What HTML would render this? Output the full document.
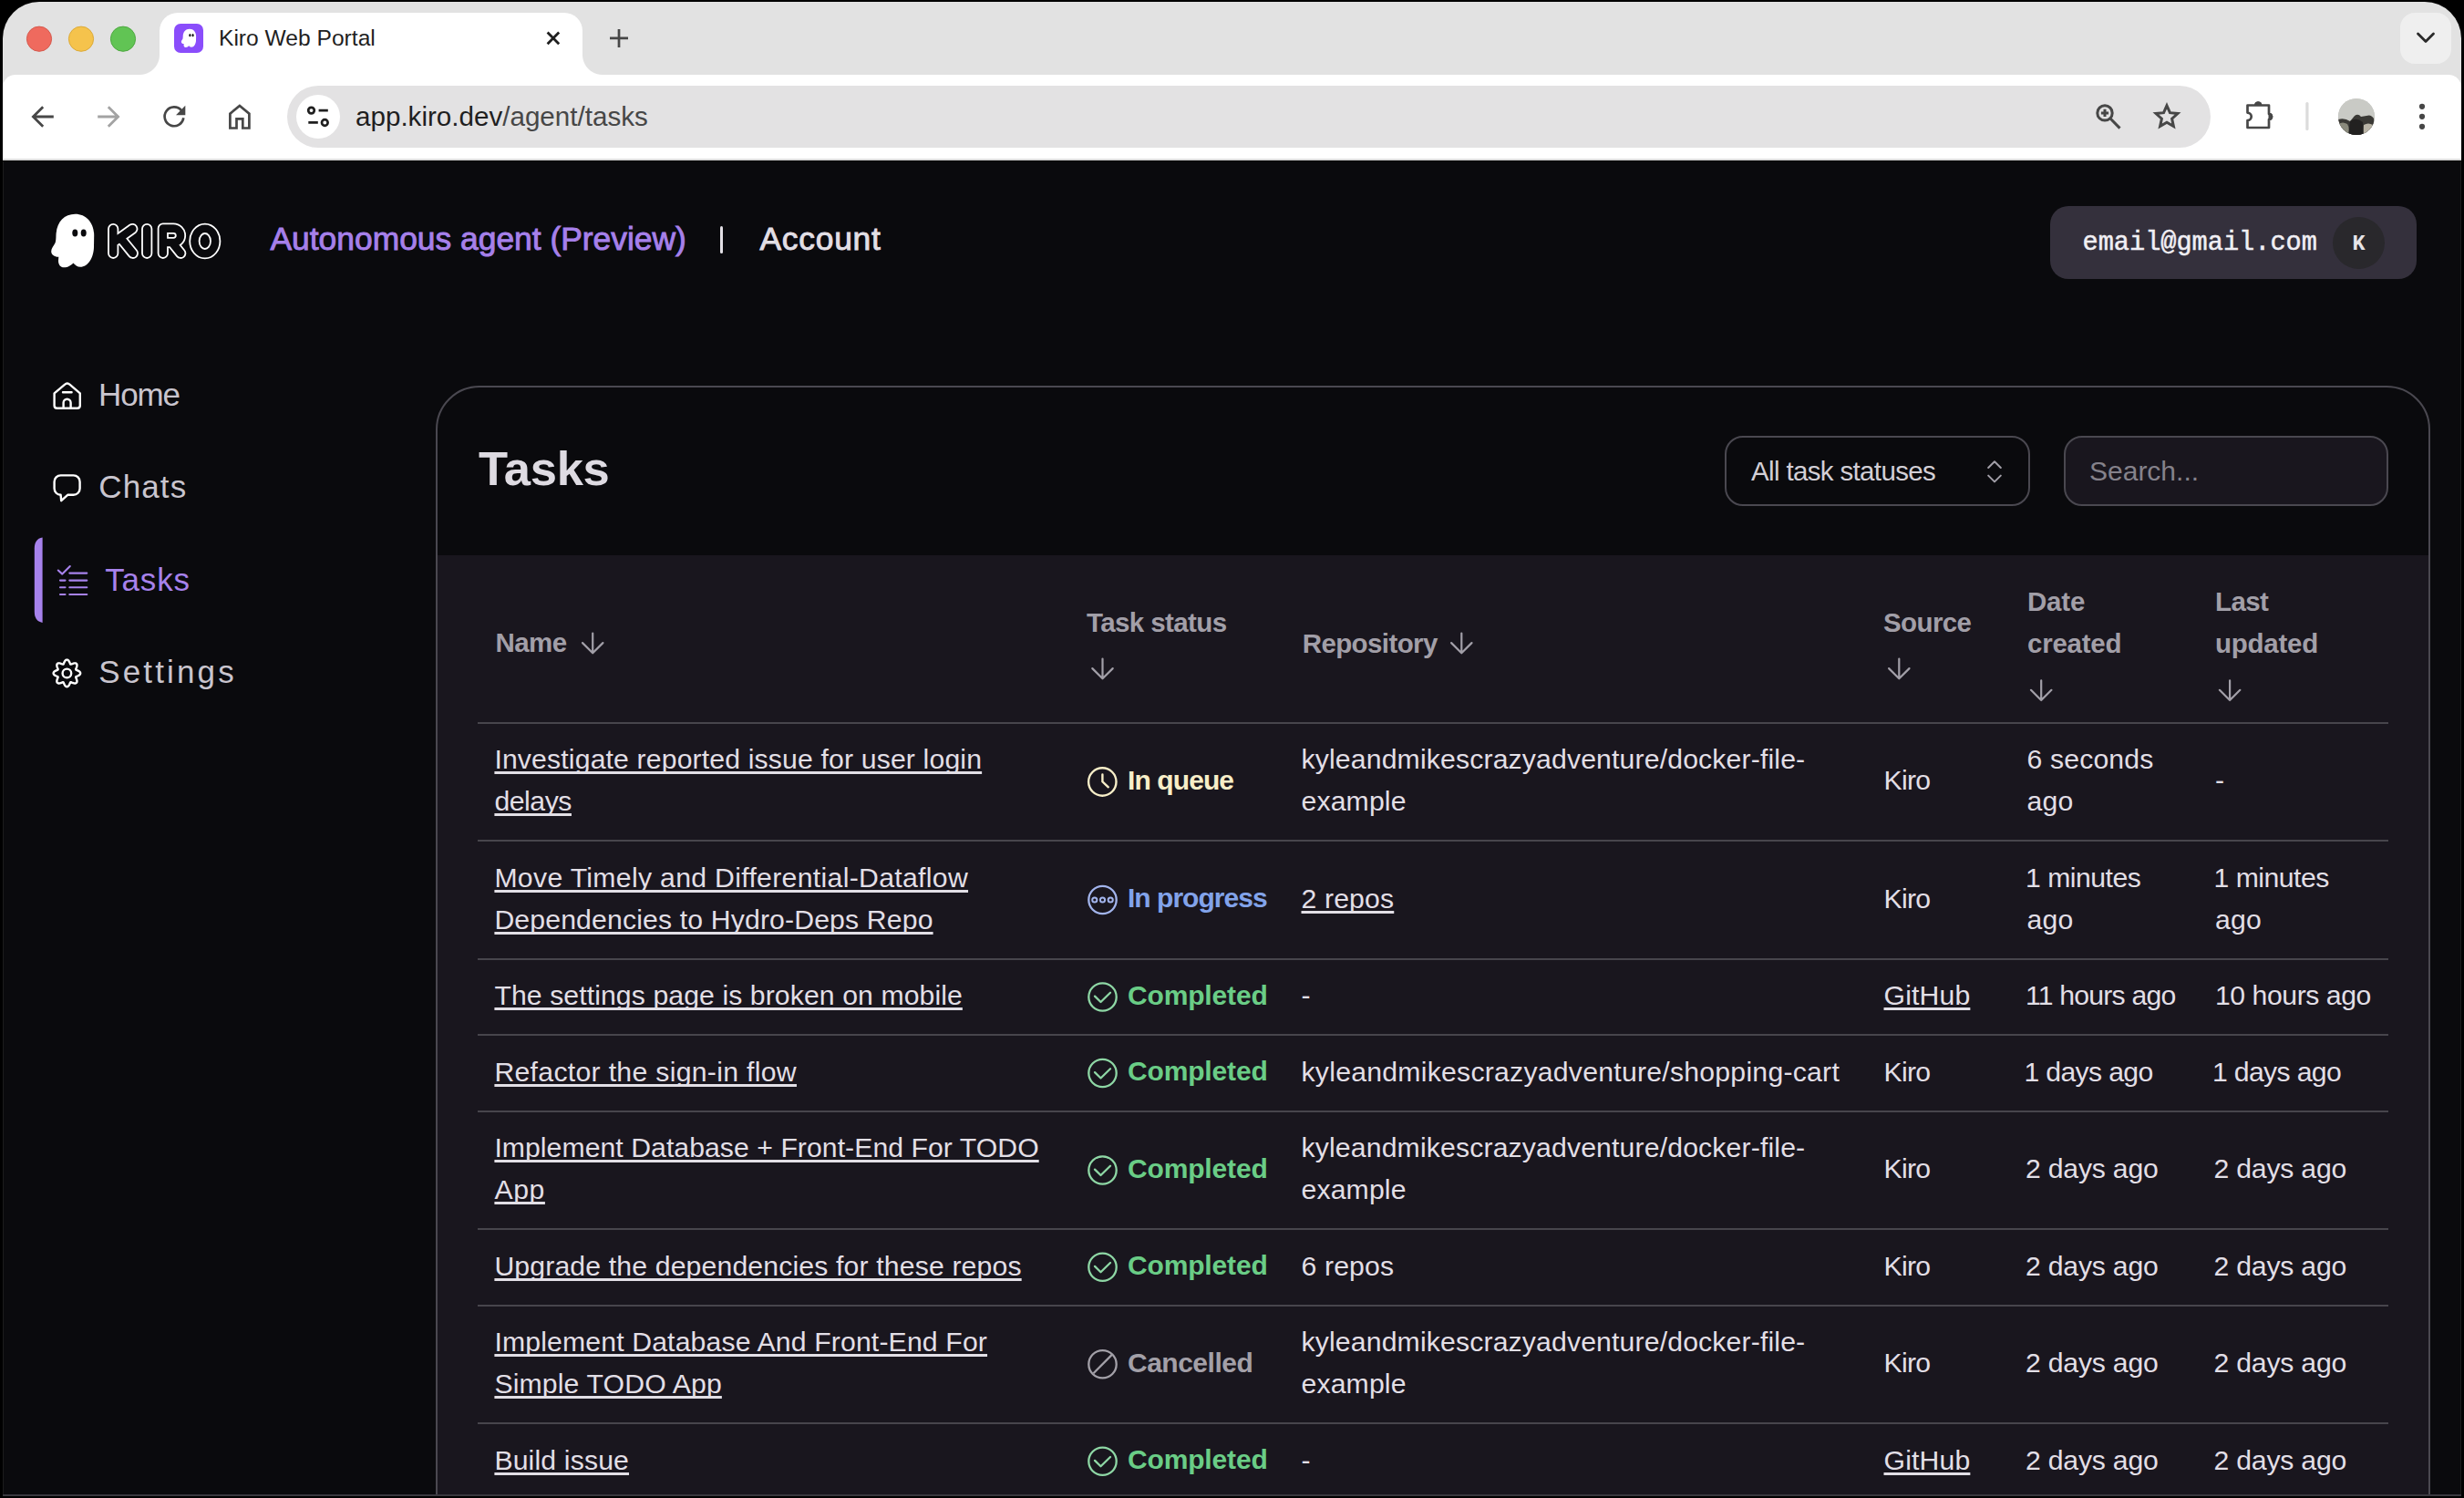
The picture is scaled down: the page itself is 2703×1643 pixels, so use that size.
<!DOCTYPE html>
<html><head><meta charset="utf-8"><title>Kiro Web Portal</title>
<style>
html,body{margin:0;padding:0}
body{width:2703px;height:1643px;background:#000;position:relative;overflow:hidden;font-family:'Liberation Sans', sans-serif}
</style></head><body>
<div style="position:absolute;left:3px;top:2px;width:2697px;height:120px;background:#e2e2e2;border-radius:40px 40px 0 0"></div><div style="position:absolute;left:3px;top:82px;width:2697px;height:92px;background:#ffffff;border-radius:14px 14px 0 0"></div><div style="position:absolute;left:3px;top:174px;width:2697px;height:2px;background:#dcdcdc"></div><div style="position:absolute;left:3px;top:176px;width:2697px;height:1463px;background:#0a0a0d;border-left:1px solid #1c1c1c;border-right:1px solid #1c1c1c;box-sizing:border-box"></div><div style="position:absolute;left:3px;top:176px;width:2697px;height:1px;background:#050505"></div><div style="position:absolute;left:175px;top:14px;width:464px;height:70px;background:#fff;border-radius:20px 20px 0 0"></div><div style="position:absolute;left:153px;top:60px;width:22px;height:22px;background:radial-gradient(circle at 0 0, transparent 21.5px, #fff 22.5px)"></div><div style="position:absolute;left:639px;top:60px;width:22px;height:22px;background:radial-gradient(circle at 100% 0, transparent 21.5px, #fff 22.5px)"></div><div style="position:absolute;left:2633px;top:14px;width:56px;height:56px;background:#efefef;border-radius:16px"></div><div style="position:absolute;left:315px;top:94px;width:2110px;height:68px;background:#e3e2e3;border-radius:34px"></div><div style="position:absolute;left:325px;top:104px;width:48px;height:48px;background:#fff;border-radius:50%"></div><div style="position:absolute;left:191px;top:26px;width:32px;height:32px;background:#8a4dfb;border-radius:7px"></div><div style="position:absolute;left:240.00px;top:29.77px;font:400 24.6px/24.6px 'Liberation Sans', sans-serif;color:#1f1f1f;letter-spacing:0px;white-space:nowrap;">Kiro Web Portal</div><div style="position:absolute;left:390.00px;top:112.84px;font:400 29.6px/29.6px 'Liberation Sans', sans-serif;color:#1f1f1f;letter-spacing:0px;white-space:nowrap;">app.kiro.dev<span style="color:#474747">/agent/tasks</span></div><div style="position:absolute;left:296.50px;top:244.63px;font:400 35.4px/35.4px 'Liberation Sans', sans-serif;color:#a680ea;letter-spacing:0px;white-space:nowrap;-webkit-text-stroke:0.9px #a680ea">Autonomous agent (Preview)</div><div style="position:absolute;left:789.5px;top:248px;width:3px;height:30px;background:#e2dfe5;border-radius:1.5px"></div><div style="position:absolute;left:833.50px;top:244.63px;font:400 35.4px/35.4px 'Liberation Sans', sans-serif;color:#e2dfe5;letter-spacing:0.75px;white-space:nowrap;-webkit-text-stroke:0.9px #e2dfe5">Account</div><div style="position:absolute;left:2249px;top:226px;width:402px;height:80px;background:#34303c;border-radius:20px"></div><div style="position:absolute;left:2559px;top:237.5px;width:57px;height:57px;background:#29282c;border-radius:50%"></div><div style="position:absolute;left:2284.50px;top:253.29px;font:400 28.6px/28.6px 'Liberation Mono', monospace;color:#f1eff4;letter-spacing:0px;white-space:nowrap;-webkit-text-stroke:0.5px #f1eff4">email@gmail.com</div><div style="position:absolute;left:2580.50px;top:255.80px;font:700 23.5px/23.5px 'Liberation Mono', monospace;color:#e6e4e8;letter-spacing:0px;white-space:nowrap;">K</div><div style="position:absolute;left:108.10px;top:415.27px;font:400 35px/35px 'Liberation Sans', sans-serif;color:#c9c5ce;letter-spacing:-1.2px;white-space:nowrap;">Home</div><div style="position:absolute;left:108.30px;top:516.37px;font:400 35px/35px 'Liberation Sans', sans-serif;color:#c9c5ce;letter-spacing:1.1px;white-space:nowrap;">Chats</div><div style="position:absolute;left:115.30px;top:617.87px;font:400 35px/35px 'Liberation Sans', sans-serif;color:#a782ec;letter-spacing:0.8px;white-space:nowrap;">Tasks</div><div style="position:absolute;left:108.20px;top:719.37px;font:400 35px/35px 'Liberation Sans', sans-serif;color:#c9c5ce;letter-spacing:3.15px;white-space:nowrap;">Settings</div><div style="position:absolute;left:478px;top:423px;width:2188px;height:1400px;border:2px solid #4a4850;border-radius:48px;box-sizing:border-box;background:#0a0a0d;overflow:hidden"><div style="position:absolute;left:0;top:184px;width:100%;height:1300px;background:#19161e"></div></div><div style="position:absolute;left:525.00px;top:487.85px;font:700 52.5px/52.5px 'Liberation Sans', sans-serif;color:#dedbe2;letter-spacing:-0.3px;white-space:nowrap;">Tasks</div><div style="position:absolute;left:1892px;top:478px;width:335px;height:77px;border:2px solid #4a4850;border-radius:20px;box-sizing:border-box"></div><div style="position:absolute;left:1921.00px;top:502.02px;font:400 29.5px/29.5px 'Liberation Sans', sans-serif;color:#d2cfd6;letter-spacing:-0.65px;white-space:nowrap;">All task statuses</div><div style="position:absolute;left:2263.5px;top:478px;width:356px;height:77px;border:2px solid #4a4850;border-radius:20px;box-sizing:border-box;background:#19161e"></div><div style="position:absolute;left:2292.00px;top:501.60px;font:400 30px/30px 'Liberation Sans', sans-serif;color:#85828b;letter-spacing:0px;white-space:nowrap;">Search...</div><div style="position:absolute;left:543.50px;top:690.42px;font:700 29.5px/29.5px 'Liberation Sans', sans-serif;color:#a29fa8;letter-spacing:-0.6px;white-space:nowrap;">Name</div><div style="position:absolute;left:1192.00px;top:668.02px;font:700 29.5px/29.5px 'Liberation Sans', sans-serif;color:#a29fa8;letter-spacing:-0.6px;white-space:nowrap;">Task status</div><div style="position:absolute;left:1428.70px;top:690.52px;font:700 29.5px/29.5px 'Liberation Sans', sans-serif;color:#a29fa8;letter-spacing:-0.6px;white-space:nowrap;">Repository</div><div style="position:absolute;left:2066.00px;top:668.32px;font:700 29.5px/29.5px 'Liberation Sans', sans-serif;color:#a29fa8;letter-spacing:-0.6px;white-space:nowrap;">Source</div><div style="position:absolute;left:2224.00px;top:645.02px;font:700 29.5px/29.5px 'Liberation Sans', sans-serif;color:#a29fa8;letter-spacing:-0.2px;white-space:nowrap;">Date</div><div style="position:absolute;left:2224.00px;top:690.62px;font:700 29.5px/29.5px 'Liberation Sans', sans-serif;color:#a29fa8;letter-spacing:-0.25px;white-space:nowrap;">created</div><div style="position:absolute;left:2430.00px;top:645.02px;font:700 29.5px/29.5px 'Liberation Sans', sans-serif;color:#a29fa8;letter-spacing:-0.6px;white-space:nowrap;">Last</div><div style="position:absolute;left:2430.00px;top:690.62px;font:700 29.5px/29.5px 'Liberation Sans', sans-serif;color:#a29fa8;letter-spacing:-0.25px;white-space:nowrap;">updated</div><div style="position:absolute;left:524px;top:792px;width:2095.5px;height:2px;background:#47454c"></div><div style="position:absolute;left:524px;top:921px;width:2095.5px;height:2px;background:#47454c"></div><div style="position:absolute;left:524px;top:1051px;width:2095.5px;height:2px;background:#47454c"></div><div style="position:absolute;left:524px;top:1134px;width:2095.5px;height:2px;background:#47454c"></div><div style="position:absolute;left:524px;top:1218px;width:2095.5px;height:2px;background:#47454c"></div><div style="position:absolute;left:524px;top:1347px;width:2095.5px;height:2px;background:#47454c"></div><div style="position:absolute;left:524px;top:1430.5px;width:2095.5px;height:2px;background:#47454c"></div><div style="position:absolute;left:524px;top:1560px;width:2095.5px;height:2px;background:#47454c"></div><div style="position:absolute;left:542.40px;top:818.43px;font:400 30.2px/30.2px 'Liberation Sans', sans-serif;color:#e2dfe6;letter-spacing:0.15px;white-space:nowrap;text-decoration:underline;text-decoration-thickness:3px;text-underline-offset:2.7px;text-decoration-skip-ink:none">Investigate reported issue for user login</div><div style="position:absolute;left:542.40px;top:864.43px;font:400 30.2px/30.2px 'Liberation Sans', sans-serif;color:#e2dfe6;letter-spacing:-0.45px;white-space:nowrap;text-decoration:underline;text-decoration-thickness:3px;text-underline-offset:2.7px;text-decoration-skip-ink:none">delays</div><div style="position:absolute;left:1237.00px;top:840.80px;font:700 30px/30px 'Liberation Sans', sans-serif;color:#f7eec8;letter-spacing:-0.9px;white-space:nowrap;">In queue</div><div style="position:absolute;left:1427.50px;top:818.43px;font:400 30.2px/30.2px 'Liberation Sans', sans-serif;color:#e2dfe6;letter-spacing:0.15px;white-space:nowrap;">kyleandmikescrazyadventure/docker-file-</div><div style="position:absolute;left:1427.50px;top:864.43px;font:400 30.2px/30.2px 'Liberation Sans', sans-serif;color:#e2dfe6;letter-spacing:0.15px;white-space:nowrap;">example</div><div style="position:absolute;left:2066.50px;top:841.43px;font:400 30.2px/30.2px 'Liberation Sans', sans-serif;color:#e2dfe6;letter-spacing:-0.72px;white-space:nowrap;">Kiro</div><div style="position:absolute;left:2223.50px;top:818.43px;font:400 30.2px/30.2px 'Liberation Sans', sans-serif;color:#e2dfe6;letter-spacing:0.15px;white-space:nowrap;">6 seconds</div><div style="position:absolute;left:2223.50px;top:864.43px;font:400 30.2px/30.2px 'Liberation Sans', sans-serif;color:#e2dfe6;letter-spacing:0.15px;white-space:nowrap;">ago</div><div style="position:absolute;left:2430.00px;top:841.43px;font:400 30.2px/30.2px 'Liberation Sans', sans-serif;color:#e2dfe6;letter-spacing:0.15px;white-space:nowrap;">-</div><div style="position:absolute;left:542.40px;top:947.93px;font:400 30.2px/30.2px 'Liberation Sans', sans-serif;color:#e2dfe6;letter-spacing:0.32px;white-space:nowrap;text-decoration:underline;text-decoration-thickness:3px;text-underline-offset:2.7px;text-decoration-skip-ink:none">Move Timely and Differential-Dataflow</div><div style="position:absolute;left:542.40px;top:993.93px;font:400 30.2px/30.2px 'Liberation Sans', sans-serif;color:#e2dfe6;letter-spacing:0.15px;white-space:nowrap;text-decoration:underline;text-decoration-thickness:3px;text-underline-offset:2.7px;text-decoration-skip-ink:none">Dependencies to Hydro-Deps Repo</div><div style="position:absolute;left:1237.00px;top:970.30px;font:700 30px/30px 'Liberation Sans', sans-serif;color:#82a3ea;letter-spacing:-0.98px;white-space:nowrap;">In progress</div><div style="position:absolute;left:1427.50px;top:970.93px;font:400 30.2px/30.2px 'Liberation Sans', sans-serif;color:#e2dfe6;letter-spacing:0.15px;white-space:nowrap;text-decoration:underline;text-decoration-thickness:3px;text-underline-offset:2.7px;text-decoration-skip-ink:none">2 repos</div><div style="position:absolute;left:2066.50px;top:970.93px;font:400 30.2px/30.2px 'Liberation Sans', sans-serif;color:#e2dfe6;letter-spacing:-0.72px;white-space:nowrap;">Kiro</div><div style="position:absolute;left:2222.00px;top:947.93px;font:400 30.2px/30.2px 'Liberation Sans', sans-serif;color:#e2dfe6;letter-spacing:-0.5px;white-space:nowrap;">1 minutes</div><div style="position:absolute;left:2223.50px;top:993.93px;font:400 30.2px/30.2px 'Liberation Sans', sans-serif;color:#e2dfe6;letter-spacing:0.15px;white-space:nowrap;">ago</div><div style="position:absolute;left:2428.50px;top:947.93px;font:400 30.2px/30.2px 'Liberation Sans', sans-serif;color:#e2dfe6;letter-spacing:-0.5px;white-space:nowrap;">1 minutes</div><div style="position:absolute;left:2430.00px;top:993.93px;font:400 30.2px/30.2px 'Liberation Sans', sans-serif;color:#e2dfe6;letter-spacing:0.15px;white-space:nowrap;">ago</div><div style="position:absolute;left:542.40px;top:1077.43px;font:400 30.2px/30.2px 'Liberation Sans', sans-serif;color:#e2dfe6;letter-spacing:0.09px;white-space:nowrap;text-decoration:underline;text-decoration-thickness:3px;text-underline-offset:2.7px;text-decoration-skip-ink:none">The settings page is broken on mobile</div><div style="position:absolute;left:1237.00px;top:1076.80px;font:700 30px/30px 'Liberation Sans', sans-serif;color:#6acd86;letter-spacing:-0.16px;white-space:nowrap;">Completed</div><div style="position:absolute;left:1427.50px;top:1077.43px;font:400 30.2px/30.2px 'Liberation Sans', sans-serif;color:#e2dfe6;letter-spacing:0.15px;white-space:nowrap;">-</div><div style="position:absolute;left:2066.50px;top:1077.43px;font:400 30.2px/30.2px 'Liberation Sans', sans-serif;color:#e2dfe6;letter-spacing:0.15px;white-space:nowrap;text-decoration:underline;text-decoration-thickness:3px;text-underline-offset:2.7px;text-decoration-skip-ink:none">GitHub</div><div style="position:absolute;left:2222.00px;top:1077.43px;font:400 30.2px/30.2px 'Liberation Sans', sans-serif;color:#e2dfe6;letter-spacing:-0.8px;white-space:nowrap;">11 hours ago</div><div style="position:absolute;left:2430.00px;top:1077.43px;font:400 30.2px/30.2px 'Liberation Sans', sans-serif;color:#e2dfe6;letter-spacing:-0.45px;white-space:nowrap;">10 hours ago</div><div style="position:absolute;left:542.40px;top:1160.93px;font:400 30.2px/30.2px 'Liberation Sans', sans-serif;color:#e2dfe6;letter-spacing:0.31px;white-space:nowrap;text-decoration:underline;text-decoration-thickness:3px;text-underline-offset:2.7px;text-decoration-skip-ink:none">Refactor the sign-in flow</div><div style="position:absolute;left:1237.00px;top:1160.30px;font:700 30px/30px 'Liberation Sans', sans-serif;color:#6acd86;letter-spacing:-0.16px;white-space:nowrap;">Completed</div><div style="position:absolute;left:1427.50px;top:1160.93px;font:400 30.2px/30.2px 'Liberation Sans', sans-serif;color:#e2dfe6;letter-spacing:0.25px;white-space:nowrap;">kyleandmikescrazyadventure/shopping-cart</div><div style="position:absolute;left:2066.50px;top:1160.93px;font:400 30.2px/30.2px 'Liberation Sans', sans-serif;color:#e2dfe6;letter-spacing:-0.72px;white-space:nowrap;">Kiro</div><div style="position:absolute;left:2220.50px;top:1160.93px;font:400 30.2px/30.2px 'Liberation Sans', sans-serif;color:#e2dfe6;letter-spacing:-0.67px;white-space:nowrap;">1 days ago</div><div style="position:absolute;left:2427.00px;top:1160.93px;font:400 30.2px/30.2px 'Liberation Sans', sans-serif;color:#e2dfe6;letter-spacing:-0.67px;white-space:nowrap;">1 days ago</div><div style="position:absolute;left:542.40px;top:1244.43px;font:400 30.2px/30.2px 'Liberation Sans', sans-serif;color:#e2dfe6;letter-spacing:0.05px;white-space:nowrap;text-decoration:underline;text-decoration-thickness:3px;text-underline-offset:2.7px;text-decoration-skip-ink:none">Implement Database + Front-End For TODO</div><div style="position:absolute;left:542.40px;top:1290.43px;font:400 30.2px/30.2px 'Liberation Sans', sans-serif;color:#e2dfe6;letter-spacing:0.6px;white-space:nowrap;text-decoration:underline;text-decoration-thickness:3px;text-underline-offset:2.7px;text-decoration-skip-ink:none">App</div><div style="position:absolute;left:1237.00px;top:1266.80px;font:700 30px/30px 'Liberation Sans', sans-serif;color:#6acd86;letter-spacing:-0.16px;white-space:nowrap;">Completed</div><div style="position:absolute;left:1427.50px;top:1244.43px;font:400 30.2px/30.2px 'Liberation Sans', sans-serif;color:#e2dfe6;letter-spacing:0.15px;white-space:nowrap;">kyleandmikescrazyadventure/docker-file-</div><div style="position:absolute;left:1427.50px;top:1290.43px;font:400 30.2px/30.2px 'Liberation Sans', sans-serif;color:#e2dfe6;letter-spacing:0.15px;white-space:nowrap;">example</div><div style="position:absolute;left:2066.50px;top:1267.43px;font:400 30.2px/30.2px 'Liberation Sans', sans-serif;color:#e2dfe6;letter-spacing:-0.72px;white-space:nowrap;">Kiro</div><div style="position:absolute;left:2222.00px;top:1267.43px;font:400 30.2px/30.2px 'Liberation Sans', sans-serif;color:#e2dfe6;letter-spacing:-0.21px;white-space:nowrap;">2 days ago</div><div style="position:absolute;left:2428.50px;top:1267.43px;font:400 30.2px/30.2px 'Liberation Sans', sans-serif;color:#e2dfe6;letter-spacing:-0.21px;white-space:nowrap;">2 days ago</div><div style="position:absolute;left:542.40px;top:1373.68px;font:400 30.2px/30.2px 'Liberation Sans', sans-serif;color:#e2dfe6;letter-spacing:0.15px;white-space:nowrap;text-decoration:underline;text-decoration-thickness:3px;text-underline-offset:2.7px;text-decoration-skip-ink:none">Upgrade the dependencies for these repos</div><div style="position:absolute;left:1237.00px;top:1373.05px;font:700 30px/30px 'Liberation Sans', sans-serif;color:#6acd86;letter-spacing:-0.16px;white-space:nowrap;">Completed</div><div style="position:absolute;left:1427.50px;top:1373.68px;font:400 30.2px/30.2px 'Liberation Sans', sans-serif;color:#e2dfe6;letter-spacing:0.15px;white-space:nowrap;">6 repos</div><div style="position:absolute;left:2066.50px;top:1373.68px;font:400 30.2px/30.2px 'Liberation Sans', sans-serif;color:#e2dfe6;letter-spacing:-0.72px;white-space:nowrap;">Kiro</div><div style="position:absolute;left:2222.00px;top:1373.68px;font:400 30.2px/30.2px 'Liberation Sans', sans-serif;color:#e2dfe6;letter-spacing:-0.21px;white-space:nowrap;">2 days ago</div><div style="position:absolute;left:2428.50px;top:1373.68px;font:400 30.2px/30.2px 'Liberation Sans', sans-serif;color:#e2dfe6;letter-spacing:-0.21px;white-space:nowrap;">2 days ago</div><div style="position:absolute;left:542.40px;top:1457.18px;font:400 30.2px/30.2px 'Liberation Sans', sans-serif;color:#e2dfe6;letter-spacing:0.15px;white-space:nowrap;text-decoration:underline;text-decoration-thickness:3px;text-underline-offset:2.7px;text-decoration-skip-ink:none">Implement Database And Front-End For</div><div style="position:absolute;left:542.40px;top:1503.18px;font:400 30.2px/30.2px 'Liberation Sans', sans-serif;color:#e2dfe6;letter-spacing:0.15px;white-space:nowrap;text-decoration:underline;text-decoration-thickness:3px;text-underline-offset:2.7px;text-decoration-skip-ink:none">Simple TODO App</div><div style="position:absolute;left:1237.00px;top:1479.55px;font:700 30px/30px 'Liberation Sans', sans-serif;color:#a3a0a8;letter-spacing:-0.5px;white-space:nowrap;">Cancelled</div><div style="position:absolute;left:1427.50px;top:1457.18px;font:400 30.2px/30.2px 'Liberation Sans', sans-serif;color:#e2dfe6;letter-spacing:0.15px;white-space:nowrap;">kyleandmikescrazyadventure/docker-file-</div><div style="position:absolute;left:1427.50px;top:1503.18px;font:400 30.2px/30.2px 'Liberation Sans', sans-serif;color:#e2dfe6;letter-spacing:0.15px;white-space:nowrap;">example</div><div style="position:absolute;left:2066.50px;top:1480.18px;font:400 30.2px/30.2px 'Liberation Sans', sans-serif;color:#e2dfe6;letter-spacing:-0.72px;white-space:nowrap;">Kiro</div><div style="position:absolute;left:2222.00px;top:1480.18px;font:400 30.2px/30.2px 'Liberation Sans', sans-serif;color:#e2dfe6;letter-spacing:-0.21px;white-space:nowrap;">2 days ago</div><div style="position:absolute;left:2428.50px;top:1480.18px;font:400 30.2px/30.2px 'Liberation Sans', sans-serif;color:#e2dfe6;letter-spacing:-0.21px;white-space:nowrap;">2 days ago</div><div style="position:absolute;left:542.40px;top:1586.68px;font:400 30.2px/30.2px 'Liberation Sans', sans-serif;color:#e2dfe6;letter-spacing:0.15px;white-space:nowrap;text-decoration:underline;text-decoration-thickness:3px;text-underline-offset:2.7px;text-decoration-skip-ink:none">Build issue</div><div style="position:absolute;left:1237.00px;top:1586.05px;font:700 30px/30px 'Liberation Sans', sans-serif;color:#6acd86;letter-spacing:-0.16px;white-space:nowrap;">Completed</div><div style="position:absolute;left:1427.50px;top:1586.68px;font:400 30.2px/30.2px 'Liberation Sans', sans-serif;color:#e2dfe6;letter-spacing:0.15px;white-space:nowrap;">-</div><div style="position:absolute;left:2066.50px;top:1586.68px;font:400 30.2px/30.2px 'Liberation Sans', sans-serif;color:#e2dfe6;letter-spacing:0.15px;white-space:nowrap;text-decoration:underline;text-decoration-thickness:3px;text-underline-offset:2.7px;text-decoration-skip-ink:none">GitHub</div><div style="position:absolute;left:2222.00px;top:1586.68px;font:400 30.2px/30.2px 'Liberation Sans', sans-serif;color:#e2dfe6;letter-spacing:-0.21px;white-space:nowrap;">2 days ago</div><div style="position:absolute;left:2428.50px;top:1586.68px;font:400 30.2px/30.2px 'Liberation Sans', sans-serif;color:#e2dfe6;letter-spacing:-0.21px;white-space:nowrap;">2 days ago</div><div style="position:absolute;left:3px;top:1639px;width:2697px;height:2px;background:#3a383f"></div><div style="position:absolute;left:0;top:1641px;width:2703px;height:2px;background:#000"></div>
<svg style="position:absolute;left:0;top:0" width="2703" height="1643" viewBox="0 0 2703 1643">
<circle cx="43" cy="42.7" r="13.6" fill="#ef6a5e" stroke="#d55a4e" stroke-width="1"/><circle cx="89" cy="42.7" r="13.6" fill="#f5c34c" stroke="#dcaa38" stroke-width="1"/><circle cx="135" cy="42.7" r="13.6" fill="#61c454" stroke="#4ea941" stroke-width="1"/><g transform="translate(198.8,31.7) scale(0.345) translate(-56,-234.7)"><path d="M82.5,234.8 C95,234.8 103.2,245 103.2,258 L103,271 C102.8,282 97,292.8 88,292.8 C84.8,292.8 82.5,290.5 80.3,288.5 C78.2,291 74.5,293.3 70.3,293.3 C66,293.3 64,290 64,286 L64.3,281.8 C60,282 56.2,279.5 56.2,275.8 C56.2,272.3 59,269.8 60.5,266.5 C61.3,264.5 61.4,262 61.5,258 C62,244 70,234.8 82.5,234.8 Z" fill="#fff"/><ellipse cx="83.8" cy="255" rx="3.2" ry="4.6" fill="#111"/><ellipse cx="93" cy="255" rx="3.2" ry="4.6" fill="#111"/></g><path d="M600.6,35.6 L613.2,48.2 M613.2,35.6 L600.6,48.2" stroke="#1f1f1f" stroke-width="2.8"/><path d="M679,32 V52 M669,41.8 H689" stroke="#474747" stroke-width="2.7"/><path d="M2652.5,37 L2661,45.5 L2669.5,37" stroke="#2a2a2a" stroke-width="2.8" fill="none" stroke-linecap="round" stroke-linejoin="round"/><path d="M58.8,128 H37 M47.2,117.2 L36.4,128 L47.2,138.8" stroke="#474747" stroke-width="2.8" fill="none" stroke-linecap="butt" stroke-linejoin="miter"/><path d="M107.2,128 H129 M118.8,117.2 L129.6,128 L118.8,138.8" stroke="#a3a3a3" stroke-width="2.8" fill="none"/><path d="M198.97,121.12 A10.4,10.4 0 1 0 201.30,129.25" stroke="#474747" stroke-width="2.7" fill="none"/><path d="M203.3,115.8 V126.2 H193 Z" fill="#474747"/><path d="M252.4,140.5 V124.6 L262.9,116 L273.4,124.6 V140.5 H266.3 V130.4 H259.5 V140.5 Z" stroke="#474747" stroke-width="2.7" fill="none" stroke-linejoin="miter"/><circle cx="341.5" cy="121.1" r="3.3" stroke="#1f1f1f" stroke-width="2.7" fill="none"/><path d="M349.6,121.1 H359.8 M338.3,134.4 H348.8" stroke="#1f1f1f" stroke-width="2.7"/><circle cx="356.3" cy="134.5" r="3.3" stroke="#1f1f1f" stroke-width="2.7" fill="none"/><circle cx="2309" cy="123.9" r="8.2" stroke="#474747" stroke-width="3" fill="none"/><path d="M2314.8,129.7 L2325.5,140.6" stroke="#474747" stroke-width="3"/><path d="M2309,119.8 V128 M2304.9,123.9 H2313.1" stroke="#474747" stroke-width="3"/><path d="M2377.00,115.80 L2380.47,123.63 L2388.98,124.51 L2382.61,130.22 L2384.41,138.59 L2377.00,134.30 L2369.59,138.59 L2371.39,130.22 L2365.02,124.51 L2373.53,123.63 Z" stroke="#474747" stroke-width="3" fill="none" stroke-linejoin="miter" stroke-miterlimit="10"/><path d="M2465.5,115.5 H2489 V125 A1,1 0 0 1 2489,131 V140 H2465.5 V132 A4.2,4.2 0 0 0 2465.5,123.6 Z" stroke="#474747" stroke-width="2.7" fill="none" stroke-linejoin="round"/><path d="M2473.3,115.5 A3.9,3.9 0 0 1 2481.1,115.5 Z" fill="#474747" stroke="#474747" stroke-width="1"/><path d="M2489,124 A3.9,3.9 0 0 1 2489,131.8 Z" fill="#474747" stroke="#474747" stroke-width="1"/><rect x="2529.3" y="112" width="3.2" height="31" rx="1.5" fill="#dcdcdc"/><defs><linearGradient id="av" x1="0" y1="0" x2="0" y2="1"><stop offset="0" stop-color="#d0d1cc"/><stop offset="0.45" stop-color="#b9bab5"/><stop offset="0.6" stop-color="#6b6b66"/><stop offset="1" stop-color="#2e2e2a"/></linearGradient><clipPath id="avc"><circle cx="2585" cy="128" r="20"/></clipPath></defs><circle cx="2585" cy="128" r="20" fill="url(#av)"/><g clip-path="url(#avc)"><rect x="2565" y="108" width="40" height="40" fill="#c9cac5"/><path d="M2565,131 Q2572,129 2578,133 L2583,127 Q2587,124 2590,128 L2596,127 Q2601,125 2604,130 V150 H2565 Z" fill="#3a3935"/><path d="M2565,136 Q2570,133 2575,136 Q2578,140 2576,150 H2565 Z" fill="#8a8a7c"/><path d="M2593,137 Q2598,134 2603,137 L2600,148 H2592 Z" fill="#b9b4a6"/><path d="M2578,133 Q2585,128 2592,134 L2593,150 H2576 Z" fill="#222120"/></g><circle cx="2657" cy="116.8" r="3.1" fill="#474747"/><circle cx="2657" cy="127.8" r="3.1" fill="#474747"/><circle cx="2657" cy="138.8" r="3.1" fill="#474747"/><path d="M82.5,234.8 C95,234.8 103.2,245 103.2,258 L103,271 C102.8,282 97,292.8 88,292.8 C84.8,292.8 82.5,290.5 80.3,288.5 C78.2,291 74.5,293.3 70.3,293.3 C66,293.3 64,290 64,286 L64.3,281.8 C60,282 56.2,279.5 56.2,275.8 C56.2,272.3 59,269.8 60.5,266.5 C61.3,264.5 61.4,262 61.5,258 C62,244 70,234.8 82.5,234.8 Z" fill="#fff"/><ellipse cx="82.3" cy="255.5" rx="3" ry="4.1" fill="#0a0a0d"/><ellipse cx="91.7" cy="255.5" rx="3" ry="4.1" fill="#0a0a0d"/><path d="M124.2,251 V277.8 M126.5,264.5 L145.3,251 M132.5,261.5 L145.8,277.8 M161.2,251 V277.8 M178.8,277.8 V250.6 H190.3 A7.7,7.7 0 0 1 190.3,266 H180 M189.5,267 L198.2,277.8" stroke="#fff" stroke-width="12.2" fill="none" stroke-linecap="round" stroke-linejoin="round"/><ellipse cx="224.8" cy="264.5" rx="11.4" ry="13.7" stroke="#fff" stroke-width="12.2" fill="none"/><path d="M124.2,251 V277.8 M126.5,264.5 L145.3,251 M132.5,261.5 L145.8,277.8 M161.2,251 V277.8 M178.8,277.8 V250.6 H190.3 A7.7,7.7 0 0 1 190.3,266 H180 M189.5,267 L198.2,277.8" stroke="#0a0a0d" stroke-width="8.6" fill="none" stroke-linecap="round" stroke-linejoin="round"/><ellipse cx="224.8" cy="264.5" rx="11.4" ry="13.7" stroke="#0a0a0d" stroke-width="8.6" fill="none"/><path d="M46.6,589.6 C40.5,590.6 37.8,595 37.8,601.5 V671.1 C37.8,677.6 40.5,682 46.6,683 Z" fill="#a782ec"/><path d="M70.9,421.8 Q73.8,419.4 76.7,421.8 L87.8,431.3 V444.8 Q87.8,447.8 84.8,447.8 H62.6 Q59.6,447.8 59.6,444.8 V431.3 Z" stroke="#fff" stroke-width="2.4" fill="none" stroke-linejoin="round"/><path d="M69.6,447.8 V441.8 A4,4 0 0 1 77.6,441.8 V447.8 M69,430.2 H78.6" stroke="#fff" stroke-width="2.4" fill="none" stroke-linecap="round"/><path d="M66.6,542.8 A7,7 0 0 1 59.6,535.8 V528.4 A7,7 0 0 1 66.6,521.4 H80.6 A7,7 0 0 1 87.6,528.4 V535.8 A7,7 0 0 1 80.6,542.8 H74.2 L67.2,549.2 Z" stroke="#fff" stroke-width="2.4" fill="none" stroke-linejoin="round"/><path d="M63.8,625.5 L68.3,629.6 L76.8,621 M66,636.6 H71.5 M66,644.2 H71.5 M66,652 H71.5 M76.3,628.6 H95.3 M76.3,636.6 H95.3 M76.3,644.2 H95.3 M76.3,652 H95.3" stroke="#a782ec" stroke-width="2.1" fill="none" stroke-linecap="round" stroke-linejoin="round"/><path d="M73.40,723.60 L73.88,723.67 L74.35,723.86 L74.80,724.17 L75.22,724.58 L75.60,725.08 L75.94,725.64 L76.24,726.23 L76.50,726.82 L76.74,727.39 L76.96,727.91 L77.19,728.33 L77.46,728.61 L77.84,728.60 L78.30,728.46 L78.82,728.26 L79.39,728.02 L80.00,727.79 L80.63,727.58 L81.26,727.43 L81.88,727.34 L82.47,727.35 L83.01,727.44 L83.48,727.64 L83.87,727.93 L84.16,728.32 L84.36,728.79 L84.45,729.33 L84.46,729.92 L84.37,730.54 L84.22,731.17 L84.01,731.80 L83.78,732.41 L83.54,732.98 L83.34,733.50 L83.20,733.96 L83.19,734.34 L83.47,734.61 L83.89,734.84 L84.41,735.06 L84.98,735.30 L85.57,735.56 L86.16,735.86 L86.72,736.20 L87.22,736.58 L87.63,737.00 L87.94,737.45 L88.13,737.92 L88.20,738.40 L88.13,738.88 L87.94,739.35 L87.63,739.80 L87.22,740.22 L86.72,740.60 L86.16,740.94 L85.57,741.24 L84.98,741.50 L84.41,741.74 L83.89,741.96 L83.47,742.19 L83.19,742.46 L83.20,742.84 L83.34,743.30 L83.54,743.82 L83.78,744.39 L84.01,745.00 L84.22,745.63 L84.37,746.26 L84.46,746.88 L84.45,747.47 L84.36,748.01 L84.16,748.48 L83.87,748.87 L83.48,749.16 L83.01,749.36 L82.47,749.45 L81.88,749.46 L81.26,749.37 L80.63,749.22 L80.00,749.01 L79.39,748.78 L78.82,748.54 L78.30,748.34 L77.84,748.20 L77.46,748.19 L77.19,748.47 L76.96,748.89 L76.74,749.41 L76.50,749.98 L76.24,750.57 L75.94,751.16 L75.60,751.72 L75.22,752.22 L74.80,752.63 L74.35,752.94 L73.88,753.13 L73.40,753.20 L72.92,753.13 L72.45,752.94 L72.00,752.63 L71.58,752.22 L71.20,751.72 L70.86,751.16 L70.56,750.57 L70.30,749.98 L70.06,749.41 L69.84,748.89 L69.61,748.47 L69.34,748.19 L68.96,748.20 L68.50,748.34 L67.98,748.54 L67.41,748.78 L66.80,749.01 L66.17,749.22 L65.54,749.37 L64.92,749.46 L64.33,749.45 L63.79,749.36 L63.32,749.16 L62.93,748.87 L62.64,748.48 L62.44,748.01 L62.35,747.47 L62.34,746.88 L62.43,746.26 L62.58,745.63 L62.79,745.00 L63.02,744.39 L63.26,743.82 L63.46,743.30 L63.60,742.84 L63.61,742.46 L63.33,742.19 L62.91,741.96 L62.39,741.74 L61.82,741.50 L61.23,741.24 L60.64,740.94 L60.08,740.60 L59.58,740.22 L59.17,739.80 L58.86,739.35 L58.67,738.88 L58.60,738.40 L58.67,737.92 L58.86,737.45 L59.17,737.00 L59.58,736.58 L60.08,736.20 L60.64,735.86 L61.23,735.56 L61.82,735.30 L62.39,735.06 L62.91,734.84 L63.33,734.61 L63.61,734.34 L63.60,733.96 L63.46,733.50 L63.26,732.98 L63.02,732.41 L62.79,731.80 L62.58,731.17 L62.43,730.54 L62.34,729.92 L62.35,729.33 L62.44,728.79 L62.64,728.32 L62.93,727.93 L63.32,727.64 L63.79,727.44 L64.33,727.35 L64.92,727.34 L65.54,727.43 L66.17,727.58 L66.80,727.79 L67.41,728.02 L67.98,728.26 L68.50,728.46 L68.96,728.60 L69.34,728.61 L69.61,728.33 L69.84,727.91 L70.06,727.39 L70.30,726.82 L70.56,726.23 L70.86,725.64 L71.20,725.08 L71.58,724.58 L72.00,724.17 L72.45,723.86 L72.92,723.67 L73.40,723.60 Z" stroke="#fff" stroke-width="2.4" fill="none" stroke-linejoin="round"/><circle cx="73.4" cy="738.4" r="4.8" stroke="#fff" stroke-width="2.4" fill="none"/><path d="M2181.2,513 L2188,506.2 L2194.8,513 M2181.2,521.6 L2188,528.4 L2194.8,521.6" stroke="#a29fa8" stroke-width="2" fill="none" stroke-linecap="round" stroke-linejoin="round"/><path d="M650.2,694.5 V716.3 M639.0,705.0999999999999 L650.2,716.3 L661.4000000000001,705.0999999999999" stroke="#a29fa8" stroke-width="2.2" fill="none" stroke-linecap="round" stroke-linejoin="round"/><path d="M1209.5,722.5 V744.3 M1198.3,733.0999999999999 L1209.5,744.3 L1220.7,733.0999999999999" stroke="#a29fa8" stroke-width="2.2" fill="none" stroke-linecap="round" stroke-linejoin="round"/><path d="M1603.3,694.5 V716.3 M1592.1,705.0999999999999 L1603.3,716.3 L1614.5,705.0999999999999" stroke="#a29fa8" stroke-width="2.2" fill="none" stroke-linecap="round" stroke-linejoin="round"/><path d="M2083.3,722.5 V744.3 M2072.1000000000004,733.0999999999999 L2083.3,744.3 L2094.5,733.0999999999999" stroke="#a29fa8" stroke-width="2.2" fill="none" stroke-linecap="round" stroke-linejoin="round"/><path d="M2239.2,746.3 V768 M2228.0,756.8 L2239.2,768 L2250.3999999999996,756.8" stroke="#a29fa8" stroke-width="2.2" fill="none" stroke-linecap="round" stroke-linejoin="round"/><path d="M2446.1,746.3 V768 M2434.9,756.8 L2446.1,768 L2457.2999999999997,756.8" stroke="#a29fa8" stroke-width="2.2" fill="none" stroke-linecap="round" stroke-linejoin="round"/><circle cx="1209.3" cy="857.5" r="15.2" stroke="#f7eec8" stroke-width="2.4" fill="none"/><path d="M1209.4,849.5 V857.3 L1215.8,863.3" stroke="#f7eec8" stroke-width="2.4" fill="none" stroke-linecap="round"/><circle cx="1209.5" cy="987.0" r="15.2" stroke="#a2b4ec" stroke-width="2.3" fill="none"/><circle cx="1200.8" cy="987.0" r="2.6" stroke="#a2b4ec" stroke-width="2" fill="none"/><circle cx="1209.5" cy="987.0" r="2.6" stroke="#a2b4ec" stroke-width="2" fill="none"/><circle cx="1218.2" cy="987.0" r="2.6" stroke="#a2b4ec" stroke-width="2" fill="none"/><circle cx="1209.5" cy="1093.5" r="15.2" stroke="#8ed7a5" stroke-width="2.3" fill="none"/><path d="M1201,1092.6 L1207.5,1099.0 L1218,1088.8" stroke="#8ed7a5" stroke-width="2.3" fill="none" stroke-linecap="round" stroke-linejoin="round"/><circle cx="1209.5" cy="1177.0" r="15.2" stroke="#8ed7a5" stroke-width="2.3" fill="none"/><path d="M1201,1176.1 L1207.5,1182.5 L1218,1172.3" stroke="#8ed7a5" stroke-width="2.3" fill="none" stroke-linecap="round" stroke-linejoin="round"/><circle cx="1209.5" cy="1283.5" r="15.2" stroke="#8ed7a5" stroke-width="2.3" fill="none"/><path d="M1201,1282.6 L1207.5,1289.0 L1218,1278.8" stroke="#8ed7a5" stroke-width="2.3" fill="none" stroke-linecap="round" stroke-linejoin="round"/><circle cx="1209.5" cy="1389.75" r="15.2" stroke="#8ed7a5" stroke-width="2.3" fill="none"/><path d="M1201,1388.85 L1207.5,1395.25 L1218,1385.05" stroke="#8ed7a5" stroke-width="2.3" fill="none" stroke-linecap="round" stroke-linejoin="round"/><circle cx="1209.5" cy="1496.25" r="15.2" stroke="#a3a0a8" stroke-width="2.3" fill="none"/><path d="M1199.5,1506.25 L1220,1485.65" stroke="#a3a0a8" stroke-width="2.3" fill="none"/><circle cx="1209.5" cy="1602.75" r="15.2" stroke="#8ed7a5" stroke-width="2.3" fill="none"/><path d="M1201,1601.85 L1207.5,1608.25 L1218,1598.05" stroke="#8ed7a5" stroke-width="2.3" fill="none" stroke-linecap="round" stroke-linejoin="round"/>
</svg>
</body></html>
